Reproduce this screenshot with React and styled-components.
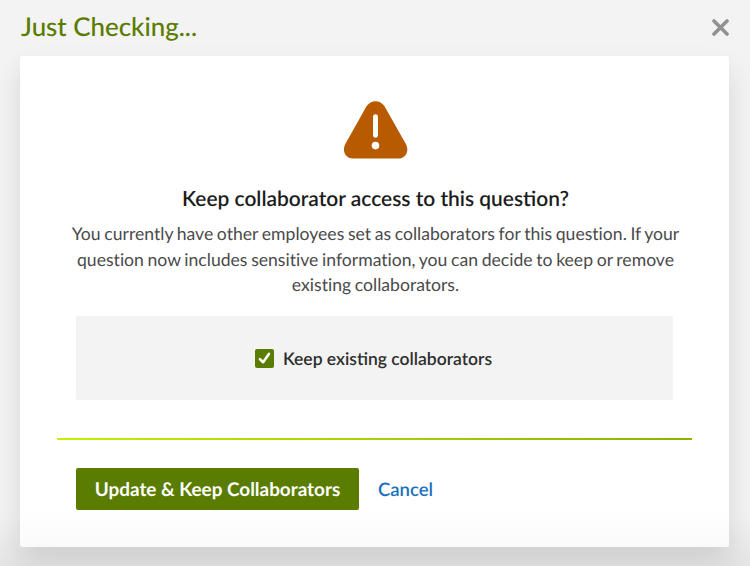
import { useState } from "react";
import styled, { createGlobalStyle } from "styled-components";

export default function App() {
  const [isKept, setIsKept] = useState(true);

  return (
    <>
      <GlobalStyle />
      <StyledModal>
        <StyledHeader>
          <StyledTitle>Just Checking...</StyledTitle>
          <StyledCloseButton aria-label="Close">
            <svg width="18" height="18" viewBox="0 0 18 18">
              <path
                d="M2 2 15 15M15 2 2 15"
                stroke="#919191"
                strokeWidth="3.6"
                strokeLinecap="round"
              />
            </svg>
          </StyledCloseButton>
        </StyledHeader>
        <StyledCard>
          <StyledWarning width="64" height="58" viewBox="0 0 64 58">
            <path
              d="M22.5 5.3C26.7-1.6 36.3-1.6 40.5 5.3L62 43.2C65.7 50.4 61.3 57.6 54 57.6H9C1.7 57.6-2.3 50.4 1.2 43.2Z"
              fill="#b75a00"
            />
            <path
              d="M31.5 15.6V34.4"
              stroke="#fff"
              strokeWidth="4.9"
              strokeLinecap="round"
            />
            <circle cx="31.5" cy="44.6" r="3.8" fill="#fff" />
          </StyledWarning>
          <StyledQuestion>
            Keep collaborator access to this question?
          </StyledQuestion>
          <StyledText>
            You currently have other employees set as collaborators for this
            question. If your question now includes sensitive information, you
            can decide to keep or remove existing collaborators.
          </StyledText>
          <StyledOption>
            <StyledLabel>
              <StyledInput
                type="checkbox"
                checked={isKept}
                onChange={() => setIsKept(!isKept)}
              />
              <StyledBox $checked={isKept}>
                {isKept && (
                  <svg width="19" height="19" viewBox="0 0 19 19">
                    <path
                      d="M4.9 10.1 8.1 13.2 13.9 4.9"
                      fill="none"
                      stroke="#fff"
                      strokeWidth="2.6"
                      strokeLinecap="round"
                      strokeLinejoin="round"
                    />
                  </svg>
                )}
              </StyledBox>
              <span>Keep existing collaborators</span>
            </StyledLabel>
          </StyledOption>
          <StyledDivider />
          <StyledFooter>
            <StyledUpdateButton>Update &amp; Keep Collaborators</StyledUpdateButton>
            <StyledCancelButton>Cancel</StyledCancelButton>
          </StyledFooter>
        </StyledCard>
      </StyledModal>
    </>
  );
}

const GlobalStyle = createGlobalStyle`
  * {
    box-sizing: border-box;
  }

  body {
    margin: 0;
    font-family: Lato, sans-serif;
    text-rendering: geometricPrecision;
  }

  button {
    border: none;
    background: none;
    padding: 0;
    font-family: inherit;
    text-rendering: inherit;
    cursor: pointer;
  }
`;

const StyledModal = styled.div`
  height: 566px;
  padding: 0 21px 0 20px;
  overflow: hidden;
  background: linear-gradient(rgba(0, 0, 0, 0) 516px, rgba(0, 0, 0, 0.06)) #f3f3f3;
`;

const StyledHeader = styled.header`
  display: flex;
  align-items: center;
  justify-content: space-between;
  height: 56px;
`;

const StyledTitle = styled.h1`
  margin: 0 0 5px 1px;
  color: #5a7c00;
  font-size: 25.9px;
  font-weight: 500;
  line-height: 32px;
  white-space: nowrap;
`;

const StyledCloseButton = styled.button`
  height: 18px;
  margin: 0 -1px 0 0;
`;

const StyledCard = styled.main`
  display: flex;
  flex-direction: column;
  align-items: center;
  height: 491px;
  padding-top: 45px;
  border-radius: 3px;
  background: linear-gradient(#fff 455px, #fafafa);
  box-shadow: 0 14px 28px rgba(0, 0, 0, 0.12);
`;

const StyledWarning = styled.svg`
  flex: none;
  margin-left: 2px;
`;

const StyledQuestion = styled.h2`
  margin: 26px 0 0 2px;
  color: #1c1c1c;
  font-size: 20.95px;
  font-weight: 600;
  line-height: 28px;
  white-space: nowrap;
`;

const StyledText = styled.p`
  width: 632px;
  margin: 8px 0 0 2px;
  color: #4a4a4a;
  font-size: 17.6px;
  font-variant-ligatures: none;
  line-height: 25.7px;
  text-align: center;
  word-spacing: -0.85px;
`;

const StyledOption = styled.div`
  display: flex;
  align-items: center;
  justify-content: center;
  width: 597px;
  height: 84px;
  margin-top: 18px;
  border-radius: 2px;
  background: #f3f3f3;
`;

const StyledLabel = styled.label`
  display: flex;
  align-items: center;
  gap: 9px;
  margin-right: 2px;
  color: #2e2e2e;
  font-size: 17.5px;
  font-weight: 600;
  white-space: nowrap;
  cursor: pointer;
`;

const StyledInput = styled.input`
  position: absolute;
  opacity: 0;
`;

const StyledBox = styled.span`
  width: 19px;
  height: 19px;
  border-radius: 2px;
  background: ${({ $checked }) => ($checked ? "#5a7c00" : "#fff")};

  svg {
    display: block;
  }
`;

const StyledDivider = styled.hr`
  width: 635px;
  height: 2px;
  margin: 38px 0 0;
  border: none;
  background: linear-gradient(90deg, #c4f000, #87b500);
`;

const StyledFooter = styled.footer`
  display: flex;
  align-items: center;
  gap: 19px;
  width: 597px;
  margin-top: 28px;
`;

const StyledUpdateButton = styled.button`
  width: 283px;
  height: 42px;
  border-radius: 2px;
  background: #5a7c00;
  color: #fff;
  font-size: 18.9px;
  font-weight: 700;
  white-space: nowrap;
`;

const StyledCancelButton = styled.button`
  color: #1b6fbc;
  font-size: 18.5px;
  font-weight: 600;
`;
